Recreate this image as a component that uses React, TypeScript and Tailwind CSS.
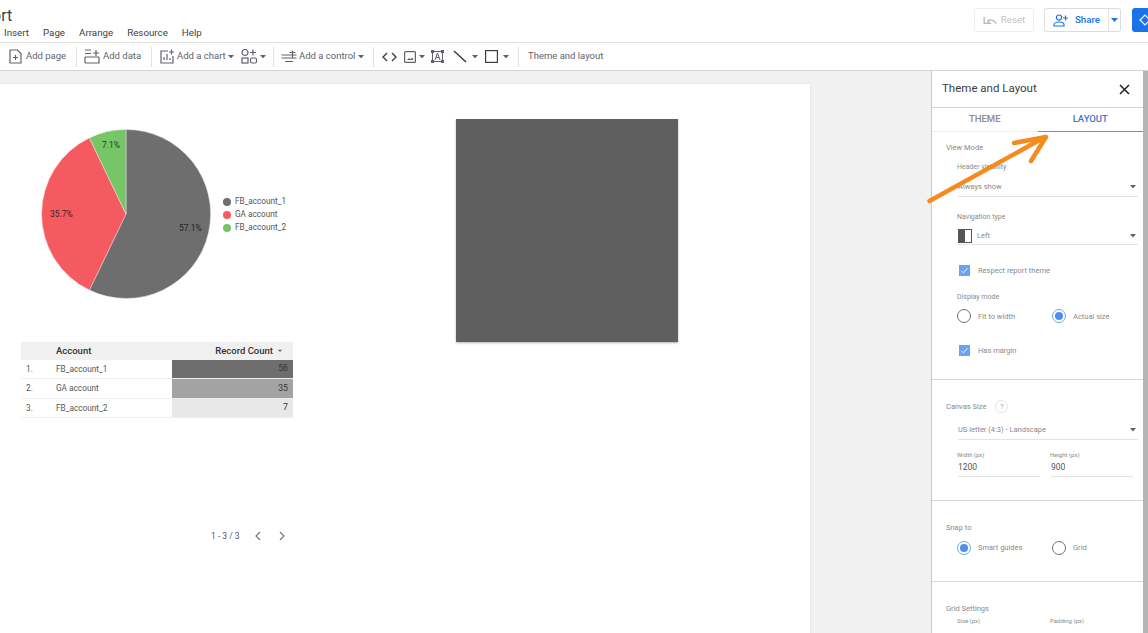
import React from "react";

const Caret = ({ className = "" }: { className?: string }) => (
  <svg width="6" height="3.5" viewBox="0 0 7 4" className={`mr-[1px] shrink-0 ${className}`}>
    <path d="M0 0h7L3.5 4z" fill="#5f6368" />
  </svg>
);

const Sep = ({ x }: { x: string }) => <div className={`h-[20px] w-px shrink-0 bg-[#e3e3e3] ${x}`} />;

const Check = () => (
  <span className="flex h-[11px] w-[11px] items-center justify-center bg-[#6ea3f2]">
    <svg width="9" height="9" viewBox="0 0 9 9" fill="none">
      <path d="M1.5 4.8l2 2 4-4.5" stroke="#fff" strokeWidth="0.9" />
    </svg>
  </span>
);

const Radio = ({ on = false }: { on?: boolean }) =>
  on ? (
    <span className="flex h-[14px] w-[14px] items-center justify-center rounded-full border border-[#6ea3f2]">
      <span className="h-[8px] w-[8px] rounded-full bg-[#4f8ff0]" />
    </span>
  ) : (
    <span className="h-[14px] w-[14px] rounded-full border border-[#6f6f6f]" />
  );

const Label = ({ className = "", children }: { className?: string; children: React.ReactNode }) => (
  <div className={`text-[7.5px] leading-[10px] text-[#8a8a8a] ${className}`}>{children}</div>
);

const SubLabel = ({ className = "", children }: { className?: string; children: React.ReactNode }) => (
  <div className={`text-[7px] leading-[10px] text-[#8a8a8a] ${className}`}>{children}</div>
);

const Select = ({ children, className = "" }: { children: React.ReactNode; className?: string }) => (
  <div className={`ml-[26px] mr-[5px] flex items-center justify-between border-b border-[#e2e2e2] pr-[1px] text-[7.5px] text-[#8a8a8a] ${className}`}>
    {children}
    <Caret />
  </div>
);

const Option = ({ control, text, className = "" }: { control: React.ReactNode; text: string; className?: string }) => (
  <div className={`flex items-center gap-[7px] ${className}`}>
    <span className="flex w-[14px] justify-center">{control}</span>
    <span className="text-[7.5px] text-[#8a8a8a]">{text}</span>
  </div>
);

export default function App() {
  return (
    <div className="relative flex h-[633px] w-[1148px] flex-col overflow-hidden bg-white font-['Roboto',sans-serif]">
      {/* top bar */}
      <header className="flex h-[43px] shrink-0 justify-between border-b border-[#e0e0e0] bg-white">
        <div className="overflow-hidden">
          <div className="ml-[-8px] h-[24px] pt-[6px] text-[16px] leading-[20px] text-[#3c4043]">ort</div>
          <nav className="ml-[4px] flex gap-[14px] pt-[2px] text-[9.75px] leading-[14px] text-[#3c4043]">
            <span>Insert</span>
            <span>Page</span>
            <span>Arrange</span>
            <span>Resource</span>
            <span>Help</span>
          </nav>
        </div>
        <div className="flex items-start pt-[8px]">
          <button className="flex h-[24px] w-[60px] items-center justify-center gap-[3px] rounded-[3px] border border-[#eeeeee] text-[9.75px] text-[#c4c4c4]">
            <svg width="15" height="9" viewBox="0 0 16 10" fill="none">
              <path d="M1 1v7h6.5L5 5.6C7.5 3.6 11.5 4 14.5 8.5" stroke="#bdbdbd" strokeWidth="1.6" />
            </svg>
            Reset
          </button>
          <div className="ml-[10px] flex h-[24px] w-[77px] rounded-[3px] border border-[#dadce0]">
            <div className="flex w-[64px] items-center justify-center gap-[6px] border-r border-[#e3e3e3] text-[9.75px] font-medium text-[#1a73e8]">
              <svg width="16" height="13" viewBox="0 0 16 13" fill="none" stroke="#1a73e8" strokeWidth="1.2">
                <circle cx="6" cy="3.6" r="2.6" />
                <path d="M1 12v-1.2C1 9 3.4 8 6 8s5 1 5 2.8V12z" />
                <path d="M12.5 1.5v5M10 4h5" />
              </svg>
              Share
            </div>
            <div className="flex flex-1 items-center justify-center">
              <svg width="7" height="4" viewBox="0 0 7 4"><path d="M0 0h7L3.5 4z" fill="#1a73e8" /></svg>
            </div>
          </div>
          <div className="ml-[11px] flex h-[24px] w-[16px] items-center overflow-hidden rounded-l-[3px] bg-[#1a73e8] pl-[7px]">
            <svg className="shrink-0" width="12" height="12" viewBox="0 0 12 12" fill="none" stroke="#fff" strokeWidth="1.2">
              <path d="M1 6l5-5 5 5-5 5z" />
            </svg>
          </div>
        </div>
      </header>

      {/* toolbar */}
      <div className="flex h-[28px] shrink-0 items-center whitespace-nowrap border-b border-[#d4d4d4] bg-white text-[9.5px] text-[#5f6368]">
        <svg className="ml-[9px] shrink-0" width="13" height="15" viewBox="0 0 13 15" fill="none" stroke="#5f6368" strokeWidth="1.2">
          <path d="M1 1h7.5L12 4.5V14H1z" />
          <path d="M6.5 6v5M4 8.5h5" />
        </svg>
        <span className="ml-[4px] w-[41px] shrink-0">Add page</span>
        <Sep x="ml-[9px]" />
        <svg className="ml-[7px] shrink-0" width="16" height="15" viewBox="0 0 16 15" fill="none" stroke="#5f6368" strokeWidth="1.2">
          <path d="M1 1h6M1 4.5h6M1 8h14M1 14h14V8M1 8v6M12 1v6M9 4h6" />
        </svg>
        <span className="ml-[3px] w-[38px] shrink-0">Add data</span>
        <Sep x="ml-[10px]" />
        <svg className="ml-[8px] shrink-0" width="15" height="15" viewBox="0 0 15 15" fill="none" stroke="#5f6368" strokeWidth="1.2">
          <path d="M8 2H1v12h12V7" />
          <path d="M4 11V8M7 11V5M10 11V9M11.5 0.5v5M9 3h5" />
        </svg>
        <span className="ml-[2px] w-[49px] shrink-0">Add a chart</span>
        <Caret className="ml-[2px]" />
        <svg className="ml-[6px] shrink-0" width="17" height="15" viewBox="0 0 17 15" fill="none" stroke="#5f6368" strokeWidth="1.2">
          <circle cx="4" cy="3.5" r="3" />
          <path d="M12 0.5v6M9 3.5h6" />
          <rect x="1" y="9" width="6" height="5" />
          <rect x="9.5" y="9" width="6" height="5" rx="1.5" />
        </svg>
        <Caret className="ml-[2px]" />
        <Sep x="ml-[6px]" />
        <svg className="ml-[7px] shrink-0" width="16" height="13" viewBox="0 0 16 13" fill="none" stroke="#5f6368" strokeWidth="1.2">
          <path d="M0.5 5h15M0.5 8h15M4 11.5h8M11.5 0.5v7M8.5 2.5h6" />
        </svg>
        <span className="ml-[2px] w-[56px] shrink-0">Add a control</span>
        <Caret className="ml-[3px]" />
        <Sep x="ml-[8px]" />
        <svg className="ml-[8px] shrink-0" width="15" height="10" viewBox="0 0 15 10" fill="none" stroke="#3c4043" strokeWidth="1.4">
          <path d="M5 1L1 5l4 4M10 1l4 4-4 4" />
        </svg>
        <svg className="ml-[7px] shrink-0" width="12" height="12" viewBox="0 0 12 12" fill="none" stroke="#5f6368" strokeWidth="1.2">
          <rect x="0.6" y="0.6" width="10.8" height="10.8" rx="1" />
          <path d="M3 9l2-2 1.5 1.2L8 6.5 9.5 9z" fill="#5f6368" stroke="none" />
        </svg>
        <Caret className="ml-[3px]" />
        <svg className="ml-[5px] shrink-0" width="13" height="13" viewBox="0 0 13 13" fill="none" stroke="#5f6368" strokeWidth="1">
          <rect x="1.5" y="1.5" width="10" height="10" />
          <rect x="0" y="0" width="2.6" height="2.6" fill="#5f6368" />
          <rect x="10.4" y="0" width="2.6" height="2.6" fill="#5f6368" />
          <rect x="0" y="10.4" width="2.6" height="2.6" fill="#5f6368" />
          <rect x="10.4" y="10.4" width="2.6" height="2.6" fill="#5f6368" />
          <path d="M4 10l2.5-7L9 10M5 7.5h3" />
        </svg>
        <svg className="ml-[9px] shrink-0" width="14" height="13" viewBox="0 0 14 13" fill="none" stroke="#3c4043" strokeWidth="1.6">
          <path d="M1 1l12 11" />
        </svg>
        <Caret className="ml-[5px]" />
        <svg className="ml-[6px] shrink-0" width="13" height="13" viewBox="0 0 13 13" fill="none" stroke="#3c4043" strokeWidth="1.2">
          <rect x="0.6" y="0.6" width="11.8" height="11.8" />
        </svg>
        <Caret className="ml-[5px]" />
        <Sep x="ml-[8px]" />
        <span className="ml-[9px]">Theme and layout</span>
      </div>

      {/* main */}
      <div className="flex min-h-0 flex-1">
        <main className="min-w-0 flex-1 bg-[#f1f1f1] pt-[13px]">
          <div className="relative h-[600px] w-[810px] bg-white shadow-[0_0_2px_rgba(0,0,0,0.12)]">
            {/* report canvas, free placement */}
            <svg className="absolute left-[40px] top-[44px]" width="172" height="172" viewBox="0 0 172 172">
              <path d="M86 86L86 1.5A84.5 84.5 0 1 1 49.4 162.1z" fill="#6e6e6e" stroke="#e4e4e4" strokeWidth="0.5" />
              <path d="M86 86L49.4 162.1A84.5 84.5 0 0 1 49.4 9.9z" fill="#f55a61" stroke="#f3d0d0" strokeWidth="0.5" />
              <path d="M86 86L49.4 9.9A84.5 84.5 0 0 1 86 1.5z" fill="#76c566" stroke="#e4efe0" strokeWidth="0.5" />
            </svg>
            <span className="absolute left-[102px] top-[56px] text-[8.5px] leading-[11px] text-[#2f3a2f]">7.1%</span>
            <span className="absolute left-[50px] top-[125px] text-[8.5px] leading-[11px] text-[#3a2525]">35.7%</span>
            <span className="absolute left-[179px] top-[139px] text-[8.5px] leading-[11px] text-[#222]">57.1%</span>
            <div className="absolute left-[223px] top-[111px] flex flex-col text-[8.2px] leading-[13px] text-[#555]">
              <div className="flex items-center gap-[4px]"><span className="h-[8px] w-[8px] rounded-full bg-[#6e6e6e]" />FB_account_1</div>
              <div className="flex items-center gap-[4px]"><span className="h-[8px] w-[8px] rounded-full bg-[#f55a61]" />GA account</div>
              <div className="flex items-center gap-[4px]"><span className="h-[8px] w-[8px] rounded-full bg-[#76c566]" />FB_account_2</div>
            </div>

            {/* table */}
            <div className="absolute left-[21px] top-[258px] w-[272px] text-[8.25px] text-[#555]">
              <div className="flex h-[18px] items-center bg-[#f0f0f0] text-[9.5px] font-medium text-[#333]">
                <span className="ml-[35px] w-[116px]">Account</span>
                <span className="flex w-[121px] items-center justify-end gap-[4px] pr-[9px]">Record Count <Caret className="scale-75" /></span>
              </div>
              {[
                ["1.", "FB_account_1", "56", "bg-[#6e6e6e]", "h-[19px]"],
                ["2.", "GA account", "35", "bg-[#a3a3a3]", "h-[20px]"],
                ["3.", "FB_account_2", "7", "bg-[#e8e8e8]", "h-[19px]"],
              ].map(([n, a, v, bg, h]) => (
                <div key={n} className={`flex items-stretch border-b border-[#eeeeee] ${h}`}>
                  <span className="flex w-[35px] items-center pl-[5px]">{n}</span>
                  <span className="flex w-[116px] items-center">{a}</span>
                  <span className={`flex w-[121px] items-center justify-end pr-[5px] text-[8.75px] text-[#333] ${bg}`}>{v}</span>
                </div>
              ))}
            </div>

            {/* pagination */}
            <div className="absolute left-[211px] top-[446px] flex h-[12px] items-center text-[8.5px] text-[#555]">
              <span className="w-[28px] whitespace-nowrap">1 - 3 / 3</span>
              <svg className="ml-[15px]" width="8" height="10" viewBox="0 0 8 10" fill="none" stroke="#777" strokeWidth="1.2"><path d="M6 1L2 5l4 4" /></svg>
              <svg className="ml-[16px]" width="8" height="10" viewBox="0 0 8 10" fill="none" stroke="#777" strokeWidth="1.2"><path d="M2 1l4 4-4 4" /></svg>
            </div>

            {/* shape */}
            <div className="absolute left-[456px] top-[35px] h-[223px] w-[222px] bg-[#5f5f5f] shadow-[0_1px_2px_rgba(0,0,0,0.3)]" />
          </div>
        </main>

        {/* panel */}
        <aside className="flex w-[212px] shrink-0 flex-col overflow-hidden border-l border-[#c8c8c8] bg-white">
          <div className="flex h-[37px] shrink-0 items-center justify-between border-b border-[#cfd3d6] pl-[10px] pr-[13px] text-[11.5px] text-[#3c4043]">
            <span>Theme and Layout</span>
            <svg width="11" height="11" viewBox="0 0 11 11" stroke="#202124" strokeWidth="1.5"><path d="M1 1l9 9M10 1l-9 9" /></svg>
          </div>
          <div className="flex h-[24px] shrink-0 border-b border-[#ececec] text-[9.5px] font-medium">
            <div className="flex flex-1 items-center justify-center text-[#8a8a8a]">THEME</div>
            <div className="mb-[-1px] flex flex-1 items-center justify-center border-b border-[#5b93f0] text-[#4a74c9]">LAYOUT</div>
          </div>

          <section className="h-[248px] shrink-0 border-b border-[#d8d8d8] pt-[11px]">
            <Label className="ml-[14px]">View Mode</Label>
            <SubLabel className="ml-[25px] mt-[9px]">Header visibility</SubLabel>
            <Select className="mt-[7px] h-[18px] pb-[2px]">Always show</Select>
            <SubLabel className="ml-[25px] mt-[15px]">Navigation type</SubLabel>
            <Select className="mt-[6px] h-[17px]">
              <span className="flex items-center gap-[5px]">
                <span className="flex h-[14px] w-[14px] border border-[#555]">
                  <span className="h-full w-[6px] bg-[#555]" />
                </span>
                Left
              </span>
            </Select>
            <Option className="ml-[25px] mt-[20px]" control={<Check />} text="Respect report theme" />
            <SubLabel className="ml-[25px] mt-[16px]">Display mode</SubLabel>
            <div className="ml-[25px] mt-[7px] flex">
              <Option className="w-[95px]" control={<Radio />} text="Fit to width" />
              <Option control={<Radio on />} text="Actual size" />
            </div>
            <Option className="ml-[25px] mt-[22px]" control={<Check />} text="Has margin" />
          </section>

          <section className="h-[121px] shrink-0 border-b border-[#d8d8d8] pt-[20px]">
            <div className="ml-[14px] flex items-center gap-[9px]">
              <Label>Canvas Size</Label>
              <span className="flex h-[13px] w-[13px] items-center justify-center rounded-full border border-[#e2e2e2] text-[8px] text-[#aaa]">?</span>
            </div>
            <Select className="mt-[10px] h-[17px] pb-[2px]">US letter (4:3) - Landscape</Select>
            <div className="ml-[25px] mt-[11px] flex">
              <div className="w-[93px]">
                <div className="text-[6px] leading-[8px] text-[#8a8a8a]">Width (px)</div>
                <div className="ml-[1px] mt-[2px] h-[16px] w-[82px] border-b border-[#e2e2e2] text-[8.5px] leading-[12px] text-[#555]">1200</div>
              </div>
              <div>
                <div className="text-[6px] leading-[8px] text-[#8a8a8a]">Height (px)</div>
                <div className="ml-[1px] mt-[2px] h-[16px] w-[82px] border-b border-[#e2e2e2] text-[8.5px] leading-[12px] text-[#555]">900</div>
              </div>
            </div>
          </section>

          <section className="h-[81px] shrink-0 border-b border-[#d8d8d8] pt-[22px]">
            <Label className="ml-[14px]">Snap to</Label>
            <div className="ml-[25px] mt-[8px] flex">
              <Option className="w-[95px]" control={<Radio on />} text="Smart guides" />
              <Option control={<Radio />} text="Grid" />
            </div>
          </section>

          <section className="flex-1 pt-[22px]">
            <Label className="ml-[14px]">Grid Settings</Label>
            <div className="ml-[25px] mt-[3px] flex text-[6px] leading-[8px] text-[#8a8a8a]">
              <span className="w-[93px]">Size (px)</span>
              <span>Padding (px)</span>
            </div>
          </section>
        </aside>
        <div className="w-[5px] shrink-0 bg-[#b4b4b4]" />
      </div>

      {/* annotation arrow */}
      <svg className="pointer-events-none absolute left-[920px] top-[125px]" width="140" height="90" viewBox="0 0 140 90" fill="none" stroke="#f58b1f" strokeWidth="4.5" strokeLinecap="round" strokeLinejoin="round">
        <path d="M9.5 76L125 12" />
        <path d="M94 18L126 12L111 36" />
      </svg>
    </div>
  );
}
